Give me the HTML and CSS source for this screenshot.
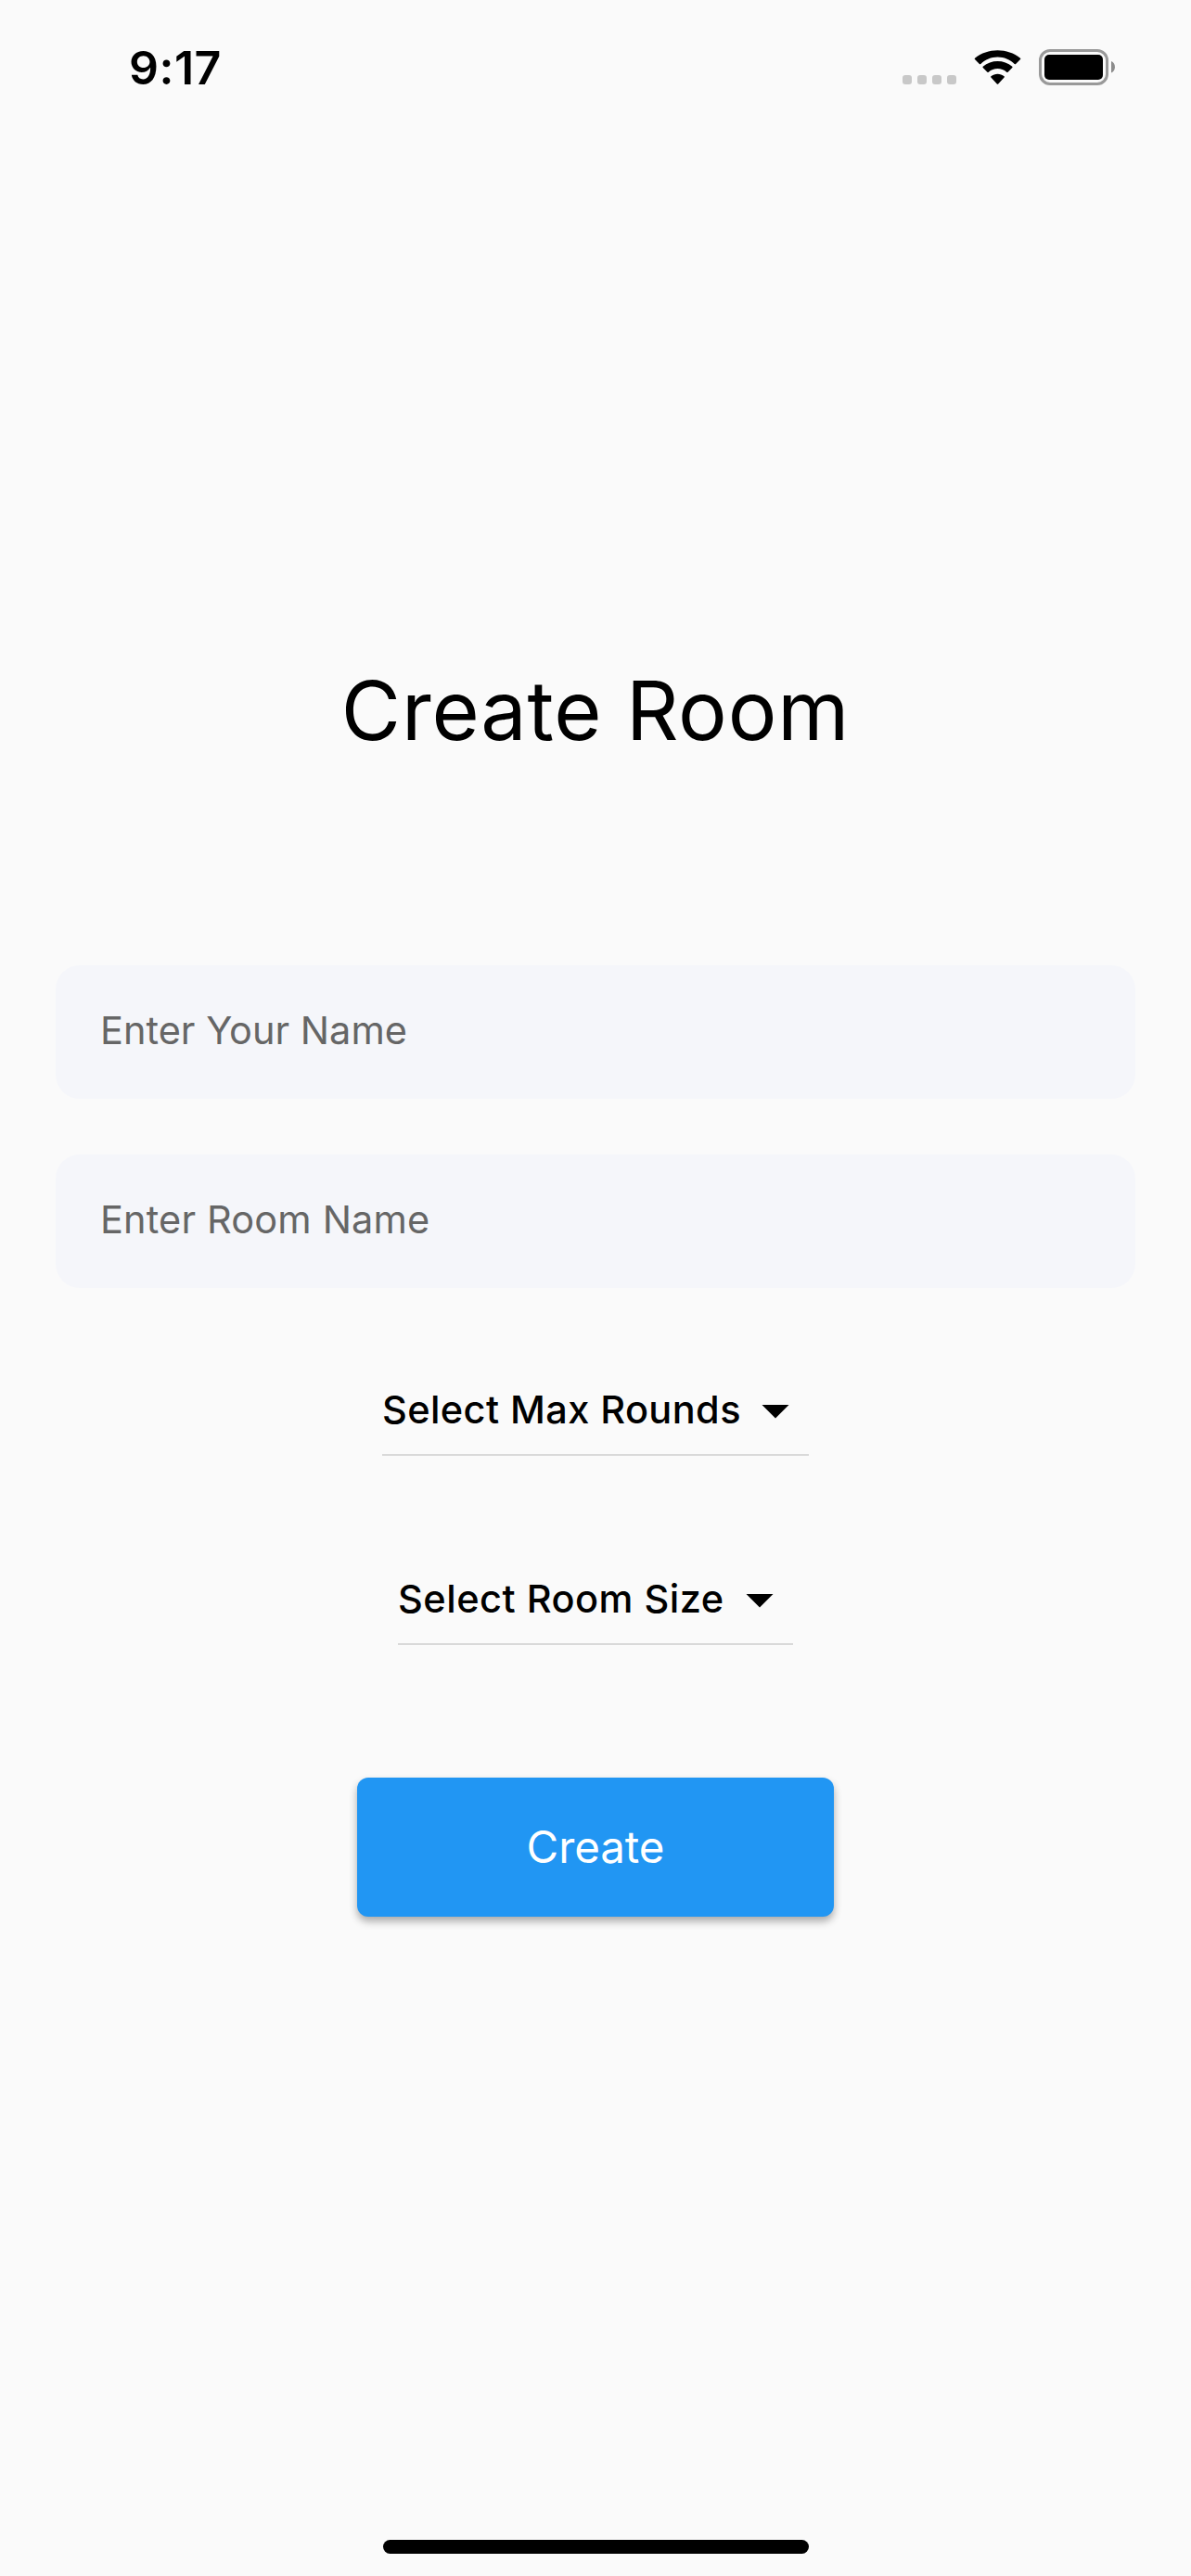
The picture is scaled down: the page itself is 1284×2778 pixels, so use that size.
FILE: index.html
```html
<!DOCTYPE html>
<html lang="en">
<head>
<meta charset="utf-8">
<title>Create Room</title>
<link rel="stylesheet" href="styles.css">
</head>
<body>
<header class="status">
  <span class="time">9:17</span>
  <div class="indicators">
    <svg class="dots" width="58" height="10" viewBox="0 0 58 10" fill="#c8c8c8"><rect width="10" height="10" rx="3"/><rect x="16" width="10" height="10" rx="3"/><rect x="32" width="10" height="10" rx="3"/><rect x="48" width="10" height="10" rx="3"/></svg>
    <svg class="wifi" width="51" height="37" viewBox="0 0 51 37"><path d="M25.500 7.500c6.800 0 13.300 2.700 18.200 7.500.4.400 1 .4 1.400 0l4.900-4.900c.4-.4.4-.9 0-1.300C36.400-2.700 14.600-2.700 1 8.800c-.4.400-.4.900 0 1.300L5.900 15c.4.400 1 .4 1.400 0 4.900-4.800 11.400-7.500 18.200-7.500z"/><path d="M25.500 20c3.600 0 7 1.300 9.700 3.700.4.400 1 .4 1.400 0l4.700-4.700c.4-.4.4-.9 0-1.300-8.900-7.700-22.700-7.700-31.600 0-.4.400-.4.900 0 1.300l4.700 4.700c.4.400 1 .4 1.400 0 2.700-2.400 6.100-3.700 9.700-3.700z"/><path d="M32.600 28.200c.4.400.4.900 0 1.300l-6.400 6.900c-.4.400-1 .4-1.400 0l-6.400-6.900c-.4-.4-.4-.9 0-1.300 4.100-3.400 10.100-3.400 14.200 0z"/></svg>
    <svg class="battery" width="82" height="39" viewBox="0 0 82 39"><rect x="1.500" y="1.500" width="72" height="36" rx="10.500" fill="none" stroke="#999" stroke-width="3"/><rect x="6" y="6" width="63" height="27" rx="5"/><path d="M78 13v12.500c5.300-2 5.300-10.500 0-12.500z" fill="#8c8c8c"/></svg>
  </div>
</header>
<main class="room">
  <h1 class="title">Create Room</h1>
  <input class="field name" aria-label="Your name" placeholder="Enter Your Name">
  <input class="field" aria-label="Room name" placeholder="Enter Room Name">
  <div class="dropdown rounds"><span class="label">Select Max Rounds</span><svg class="caret" width="30" height="15" viewBox="0 0 30 15"><path d="M.5 0h29L15 14.500z"/></svg></div>
  <div class="dropdown size"><span class="label">Select Room Size</span><svg class="caret" width="30" height="15" viewBox="0 0 30 15"><path d="M.5 0h29L15 14.500z"/></svg></div>
  <button class="create">Create</button>
</main>
<footer class="home"></footer>
</body>
</html>
```
FILE: styles.css
```css
* { box-sizing: border-box; }
body { margin: 0; height: 2778px; display: flex; flex-direction: column; background: #fafafa; color: #000; font-family: Inter, sans-serif; overflow: hidden; }
.status { height: 145px; padding: 0 82px 0 139px; display: flex; justify-content: space-between; align-items: center; }
.time { font-size: 50px; font-weight: 600; letter-spacing: .5px; }
.indicators { display: flex; align-items: center; }
.dots { margin: 27px 19px 0 0; }
.wifi { margin-right: 19px; }
.room { flex: 1; padding: 0 60px; display: flex; flex-direction: column; align-items: center; }
.title { margin: 560px 0 0; height: 122px; line-height: 122px; font-size: 88px; font-weight: 400; letter-spacing: .8px; white-space: nowrap; }
.field { width: 100%; height: 144px; margin: 60px 0 0; padding: 0 48px 4px; border: 0; border-radius: 26px; background: #f5f6fa; font: 400 41.5px Inter, sans-serif; letter-spacing: .15px; }
.name { margin-top: 214px; letter-spacing: 0; }
.field::placeholder { color: #666; opacity: 1; }
.dropdown { display: flex; align-items: center; justify-content: space-between; height: 96px; padding-right: 21px; border-bottom: 2px solid #d9d9d9; font-size: 41.5px; font-weight: 500; letter-spacing: .5px; white-space: nowrap; }
.label { padding-bottom: 3px; }
.caret { margin-top: 2px; }
.rounds { width: 460px; margin-top: 85px; letter-spacing: .4px; }
.size { width: 426px; margin-top: 108px; }
.create { width: 514px; height: 150px; margin-top: 143px; padding: 0 0 2px; border: 0; border-radius: 12px; background: #2196f3; color: #fff; font: 400 47.5px Inter, sans-serif; letter-spacing: -.1px; box-shadow: 0 5px 8px rgba(0,0,0,.32); }
.home { align-self: center; width: 459px; height: 15px; margin-bottom: 24px; border-radius: 8px; background: #000; }
```
